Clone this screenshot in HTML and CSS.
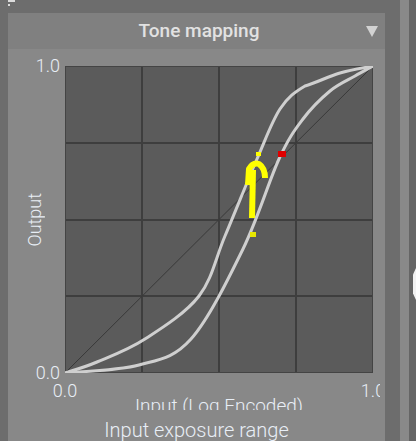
FILE: index.html
```html
<!DOCTYPE html>
<html>
<head>
<meta charset="utf-8">
<link rel="stylesheet" href="styles.css">
</head>
<body>
<div class="app">
  <div class="gutter"></div>
  <section class="panel">
    <div class="topstrip"><span class="mark-bar"></span><span class="mark-dot"></span></div>
    <header class="panel-header">
      <span></span>
      <h1 class="panel-title">Tone mapping</h1>
      <span class="caret"></span>
    </header>
    <div class="panel-body">
      <div class="graph">
        <div class="y-title"><span>Output</span></div>
        <div class="plot">
          <svg class="chart" viewBox="0 0 308 307" width="308" height="307">
            <rect width="308" height="307" fill="#5b5b5b"/>
            <path d="M77 0V307M154 0V307M231 0V307M0 77H308M0 154H308M0 230H308" stroke="#3e3e3e" stroke-width="2" fill="none"/>
            <rect x="0.5" y="0.5" width="307" height="306" fill="none" stroke="#444"/>
            <line x1="0" y1="307" x2="308" y2="0" stroke="#393939" stroke-width="1"/>
            <path d="M0 307 C5.3 305.2 18.7 301.7 32 296 C45.3 290.3 63 284 80 273 C97 262 120.7 247.2 134 230 C147.3 212.8 150.3 192.8 160 170 C169.7 147.2 182.8 114.2 192 93 C201.2 71.8 207 55.2 215 43 C223 30.8 230 26 240 20 C251.3 16.7 263.7 10.3 275 7 C286.3 3.7 302.5 1.2 308 0" stroke="#cfcfcf" stroke-width="3" fill="none"/>
            <path d="M0 307 C12.3 305.7 53 304.7 74 299 C95 293.3 108.7 292.3 126 273 C143.3 253.7 163.3 213 178 183 C192.7 153 204 114.7 214 93 C224 71.3 229.5 64.3 238 53 C246.5 41.7 256.3 32.2 265 25 C273.7 17.8 282.8 14.2 290 10 C297.2 5.8 305 1.7 308 0" stroke="#cfcfcf" stroke-width="3" fill="none"/>
            <rect x="191" y="86" width="5" height="4" fill="#ffff00"/>
            <path d="M183 119 L184 103 Q188 96 194 98 Q200 102 200 112" stroke="#ffff00" stroke-width="6" fill="none" stroke-linejoin="round"/>
            <path d="M188 104 L187 152" stroke="#ffff00" stroke-width="6" fill="none"/>
            <rect x="185" y="166" width="6" height="5" fill="#e6e600"/>
            <rect x="213" y="85" width="8" height="6" fill="#e00000"/>
          </svg>
          <span class="tick tick-y-top">1.0</span>
          <span class="tick tick-y-bottom">0.0</span>
          <span class="tick tick-x-left">0.0</span>
          <span class="tick tick-x-right">1.0</span>
        </div>
        <div class="x-title">Input (Log Encoded)</div>
      </div>
      <div class="range-label">Input exposure range</div>
    </div>
  </section>
  <div class="side-gap"></div>
  <div class="side-scroll"></div>
  <div class="side-edge"><span class="handle"></span></div>
</div>
</body>
</html>
```
FILE: styles.css
```css
html, body {
  margin: 0;
  padding: 0;
}
body {
  width: 416px;
  height: 441px;
  overflow: hidden;
  background: #6d6d6d;
  font-family: Roboto, "Liberation Sans", sans-serif;
}
.app {
  display: flex;
  height: 441px;
}
.gutter {
  width: 8px;
  flex: none;
}
.panel {
  width: 377px;
  flex: none;
  display: flex;
  flex-direction: column;
}
.topstrip {
  height: 14px;
  display: flex;
  flex-direction: column;
  align-items: flex-start;
}
.mark-bar {
  width: 7px;
  height: 2px;
  background: #dcdcdc;
  margin-bottom: 2px;
}
.mark-dot {
  width: 2px;
  height: 2px;
  background: #dcdcdc;
}
.panel-header {
  height: 36px;
  background: #808080;
  display: grid;
  grid-template-columns: 1fr auto 1fr;
  align-items: center;
}
.panel-title {
  margin: 0;
  font-size: 19px;
  font-weight: 500;
  line-height: 36px;
  color: #e2e2e2;
  padding-left: 5px;
}
.caret {
  justify-self: end;
  margin-right: 7px;
  width: 0;
  height: 0;
  border-left: 6.5px solid transparent;
  border-right: 6.5px solid transparent;
  border-top: 11px solid #d2d2d2;
}
.panel-body {
  flex: 1;
  background: #888888;
}
.graph {
  display: grid;
  width: 372px;
  grid-template-columns: 57px 308px 7px;
  grid-template-rows: 17px 307px 37px;
  overflow: hidden;
  color: #e8eef6;
}
.y-title {
  grid-row: 2;
  grid-column: 1;
  display: flex;
  align-items: center;
  padding-left: 17px;
}
.y-title span {
  writing-mode: vertical-rl;
  transform: rotate(180deg);
  font-size: 18px;
  font-weight: 300;
  line-height: 20px;
}
.plot {
  grid-row: 2;
  grid-column: 2;
  position: relative;
}
.chart {
  display: block;
}
.tick {
  position: absolute;
  font-size: 18px;
  font-weight: 300;
  line-height: 20px;
  white-space: nowrap;
}
.tick-y-top {
  right: calc(100% + 5px);
  top: -10px;
}
.tick-y-bottom {
  right: calc(100% + 5px);
  bottom: -10px;
}
.tick-x-left {
  top: calc(100% + 8px);
  left: 0;
  transform: translateX(-50%);
}
.tick-x-right {
  top: calc(100% + 8px);
  left: 100%;
  transform: translateX(-50%);
}
.x-title {
  grid-row: 3;
  grid-column: 2;
  text-align: center;
  margin-top: 22px;
  font-size: 19px;
  font-weight: 300;
  line-height: 22px;
  white-space: nowrap;
}
.range-label {
  margin-top: 9px;
  text-align: center;
  font-size: 20px;
  font-weight: 300;
  line-height: 22px;
  color: #e8eef6;
}
.side-gap {
  width: 15px;
  flex: none;
}
.side-scroll {
  width: 9px;
  flex: none;
  background: #898989;
}
.side-edge {
  flex: 1;
  background: #656565;
  display: flex;
  flex-direction: column;
  align-items: flex-end;
}
.handle {
  margin-top: 268px;
  width: 3px;
  height: 32px;
  background: #f2f2f2;
  clip-path: polygon(100% 0, 0 20%, 0 80%, 100% 100%);
}
```
